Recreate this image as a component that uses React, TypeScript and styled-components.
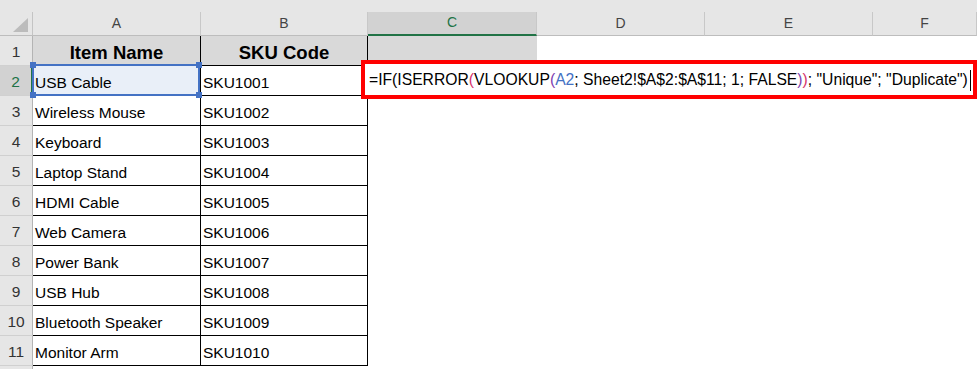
import React from 'react'
import styled, { createGlobalStyle, css } from 'styled-components'

const GlobalStyle = createGlobalStyle`
  html, body {
    margin: 0;
    padding: 0;
    background: #fff;
    overflow: hidden;
  }
  body {
    font-family: "Liberation Sans", Arial, sans-serif;
  }
`

const columns = ['A', 'B', 'C', 'D', 'E', 'F']
const activeCol = 'C'
const activeRow = 2

const items: [string, string][] = [
  ['USB Cable', 'SKU1001'],
  ['Wireless Mouse', 'SKU1002'],
  ['Keyboard', 'SKU1003'],
  ['Laptop Stand', 'SKU1004'],
  ['HDMI Cable', 'SKU1005'],
  ['Web Camera', 'SKU1006'],
  ['Power Bank', 'SKU1007'],
  ['USB Hub', 'SKU1008'],
  ['Bluetooth Speaker', 'SKU1009'],
  ['Monitor Arm', 'SKU1010'],
]

export default () => {
  const rows: string[][] = [['Item Name', 'SKU Code'], ...items.map(i => [...i])]

  return (
    <>
      <GlobalStyle />
      <Sheet>
        <TopStrip />
        <Corner><CornerTriangle /></Corner>
        {columns.map(c => (
          <ColHeader key={c} $active={c === activeCol}>{c}</ColHeader>
        ))}

        {[...rows, []].map((row, i) => {
          const r = i + 1
          // the last row is only a sliver at the bottom edge, so no number shows
          const partial = r > rows.length
          return (
            <React.Fragment key={r}>
              <RowHeader $active={r === activeRow}>{partial ? '' : r}</RowHeader>
              {columns.map((c, ci) => {
                const value = row[ci] ?? ''
                const inTable = ci < 2 && !partial
                const isTitle = r === 1 && ci < 3
                return (
                  <Cell
                    key={c}
                    $bordered={inTable}
                    $title={isTitle}
                    $ref={r === 2 && c === 'A'}
                  >
                    {value}
                    {r === 2 && c === 'A' && (
                      <RefBox>
                        <Handle $pos="tl" />
                        <Handle $pos="tr" />
                        <Handle $pos="bl" />
                        <Handle $pos="br" />
                      </RefBox>
                    )}
                    {r === activeRow && c === activeCol && (
                      <FormulaBox>
                        =IF(ISERROR<Paren $c="#d6336c">(</Paren>VLOOKUP<Paren $c="#8040b0">(</Paren>
                        <RefText>A2</RefText>; Sheet2!$A$2:$A$11; 1; FALSE<Paren $c="#8040b0">)</Paren>
                        <Paren $c="#d6336c">)</Paren>; "Unique"; "Duplicate")
                        <Caret />
                      </FormulaBox>
                    )}
                  </Cell>
                )
              })}
            </React.Fragment>
          )
        })}
      </Sheet>
    </>
  )
}

const Sheet = styled.div`
  display: grid;
  grid-template-columns: 33px 168px 167px 169px 168px 168px 1fr;
  grid-template-rows: 12px 24px repeat(12, 30px);
  width: 100vw;
  height: 100vh;
  overflow: hidden;
  background: #fff;
`

const TopStrip = styled.div`
  grid-column: 1 / -1;
  background: #e6e6e6;
`

const Corner = styled.div`
  position: relative;
  background: #e6e6e6;
  border-right: 1px solid #c4c4c4;
  border-bottom: 1px solid #bdbdbd;
`

const CornerTriangle = styled.span`
  position: absolute;
  right: 4px;
  bottom: 3px;
  width: 15px;
  height: 14px;
  background: #bcbcbc;
  clip-path: polygon(100% 0, 100% 100%, 0 100%);
`

const ColHeader = styled.div<{ $active?: boolean }>`
  display: flex;
  align-items: flex-end;
  justify-content: center;
  padding-bottom: 4px;
  box-sizing: border-box;
  font-size: 14px;
  line-height: 16px;
  color: #444;
  background: #e6e6e6;
  border-right: 1px solid #c8c8c8;
  border-bottom: 1px solid #bdbdbd;
  ${p => p.$active && css`
    background: #d2d2d2;
    color: #217346;
    border-bottom: 2px solid #217346;
  `}
`

const RowHeader = styled.div<{ $active?: boolean }>`
  display: flex;
  align-items: flex-end;
  justify-content: center;
  padding-bottom: 4px;
  box-sizing: border-box;
  font-size: 15.5px;
  line-height: 18px;
  color: #333;
  background: #e6e6e6;
  border-right: 1px solid #b4b4b4;
  border-bottom: 1px solid #d0d0d0;
  ${p => p.$active && css`
    background: #d2d2d2;
    color: #217346;
    border-right: 2px solid #217346;
  `}
`

const Cell = styled.div<{ $bordered?: boolean; $title?: boolean; $ref?: boolean }>`
  position: relative;
  display: flex;
  align-items: flex-end;
  box-sizing: border-box;
  padding: 0 0 3px 2px;
  font-size: 15.5px;
  line-height: 18px;
  color: #000;
  white-space: nowrap;
  ${p => p.$bordered && css`
    border-right: 1px solid #000;
    border-bottom: 1px solid #000;
  `}
  ${p => p.$title && css`
    background: #d9d9d9;
    justify-content: center;
    padding: 0 0 1px 0;
    font-weight: bold;
    font-size: 18.5px;
    line-height: 22px;
  `}
  ${p => p.$ref && css`
    background: #e9eff8;
  `}
`

const RefBox = styled.span`
  position: absolute;
  top: -2px;
  left: -1px;
  right: 0;
  bottom: -1px;
  border: 2px solid #4472c4;
  z-index: 2;
`

const handlePos = {
  tl: css`top: -4px; left: -4px;`,
  tr: css`top: -4px; right: -4px;`,
  bl: css`bottom: -4px; left: -4px;`,
  br: css`bottom: -4px; right: -4px;`,
}

const Handle = styled.span<{ $pos: keyof typeof handlePos }>`
  position: absolute;
  width: 6px;
  height: 6px;
  background: #4472c4;
  ${p => handlePos[p.$pos]}
`

const FormulaBox = styled.div`
  position: absolute;
  left: -7px;
  top: -6px;
  width: 616px;
  height: 39px;
  box-sizing: border-box;
  border: 4px solid #ff0000;
  background: #fff;
  padding: 6px 0 0 4px;
  display: flex;
  align-items: flex-start;
  font-size: 15.7px;
  line-height: 20px;
  color: #000;
  white-space: pre;
  z-index: 3;
`

const Paren = styled.span<{ $c: string }>`
  color: ${p => p.$c};
`

const RefText = styled.span`
  color: #4472c4;
`

const Caret = styled.span`
  display: inline-block;
  width: 1px;
  height: 21px;
  margin-left: 2px;
  background: #000;
`
